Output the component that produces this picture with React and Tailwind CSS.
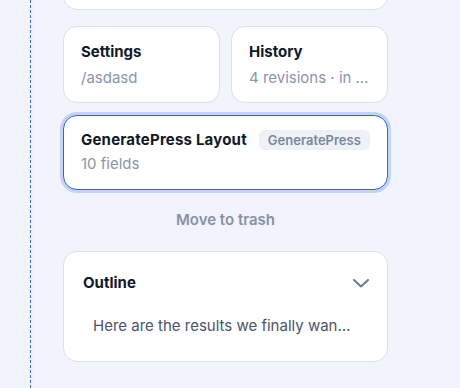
import React from "react";

export default function App() {
  return (
    <div
      className="w-[460px] h-[388px] overflow-hidden bg-[#f1f4fa] flex"
      style={{ fontFamily: "Inter, 'Noto Sans', sans-serif" }}
    >
      {/* dashed guide */}
      <div className="w-[31px] shrink-0 border-r border-dashed border-[#3b6ff5]" />

      <div className="w-[325px] ml-[32px] flex flex-col">
        {/* previous card, cut off */}
        <div className="h-[40px] -mt-[30px] bg-white border border-[#d8e1ef] rounded-[14px]" />

        <div className="grid grid-cols-2 gap-[11px] mt-[16px]">
          <div className="h-[77px] bg-white border border-[#d8e1ef] rounded-[14px] px-[17px] pt-[15px]">
            <div className="text-[15px] font-bold text-[#111827] leading-[20px]">Settings</div>
            <div className="text-[15px] text-[#8a96ab] leading-[20px] mt-[6px]">/asdasd</div>
          </div>
          <div className="h-[77px] bg-white border border-[#d8e1ef] rounded-[14px] px-[17px] pt-[15px]">
            <div className="text-[15px] font-bold text-[#111827] leading-[20px]">History</div>
            <div className="text-[15px] text-[#8a96ab] leading-[20px] mt-[6px] whitespace-nowrap">
              4 revisions · in …
            </div>
          </div>
        </div>

        <div className="mt-[12px] h-[75px] bg-white border border-[#2f63e6] rounded-[14px] ring-[3px] ring-[#c3d4f8] px-[17px] pt-[14px]">
          <div className="flex items-center gap-[12px]">
            <span className="text-[15px] font-bold text-[#111827] leading-[20px] tracking-[0.2px]">
              GeneratePress Layout
            </span>
            <span className="bg-[#eef2f8] text-[#7b879b] text-[13px] font-semibold rounded-[6px] px-[9px] leading-[20px]">
              GeneratePress
            </span>
          </div>
          <div className="text-[15px] text-[#8a96ab] leading-[20px] mt-[4px]">10 fields</div>
        </div>

        <div className="mt-[20px] text-center text-[15px] font-semibold text-[#8791a5] leading-[20px]">
          Move to trash
        </div>

        <div className="mt-[21px] h-[111px] bg-white border border-[#d8e1ef] rounded-[14px] pl-[19px] pr-[16px] pt-[21px]">
          <div className="flex items-center justify-between">
            <span className="text-[15px] font-bold text-[#111827] leading-[20px]">Outline</span>
            <svg width="20" height="20" viewBox="0 0 20 20" fill="none" stroke="#6b7a94" strokeWidth="2" strokeLinecap="round" strokeLinejoin="round">
              <path d="M3 7l7 6.5L17 7" />
            </svg>
          </div>
          <div className="mt-[23px] pl-[10px] text-[15px] text-[#4b5568] leading-[20px] whitespace-nowrap">
            Here are the results we finally wan…
          </div>
        </div>
      </div>
    </div>
  );
}
